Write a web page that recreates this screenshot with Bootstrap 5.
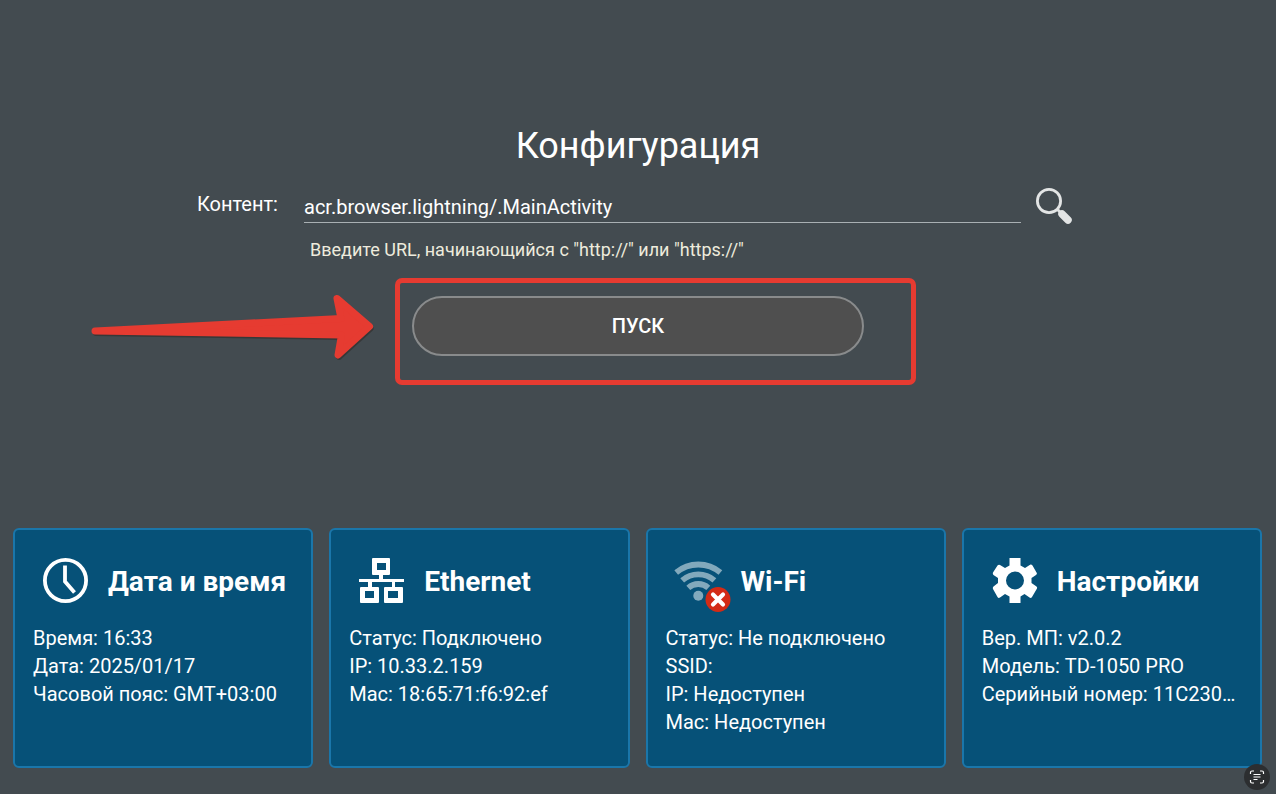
<!DOCTYPE html>
<html lang="ru">
<head>
<meta charset="utf-8">
<meta name="viewport" content="width=device-width, initial-scale=1">
<title>Конфигурация</title>
<link rel="stylesheet" href="https://cdn.jsdelivr.net/npm/bootstrap@5.3.0/dist/css/bootstrap.min.css">
<style>
  body { background: #434b50; color: #fff; font-family: Roboto, "Noto Sans", sans-serif; font-size: 20px; line-height: 28px; }
  .config-area { padding-top: 124px; }
  .config-title { font-size: 36px; line-height: 44px; font-weight: 400; margin-bottom: 12px; }
  .config-form { width: 100%; max-width: 882px; }
  .content-label { width: 107px; padding-top: 10px; }
  .url-input { height: 43px; padding: 12px 0 0; border: 0; border-bottom: 1px solid #a9b0b3; border-radius: 0; background: transparent; color: #fff; font-size: 20px; line-height: 28px; }
  .url-input:focus { background: transparent; color: #fff; box-shadow: none; border-color: #fff; }
  .url-hint { margin: 6px 0 0 113px; font-size: 18px; line-height: 28px; color: #eeebdd; }
  .search-btn { width: 50px; height: 50px; }
  .start-wrap { width: 452px; max-width: 100%; margin-top: 32px; }
  .start-btn { height: 60px; border: 2px solid #898b8c; background: #4f4f4f; color: #fff; font-size: 20px; font-weight: 500; }
  .start-btn:hover { background: #5a5a5a; border-color: #a0a0a0; color: #fff; }
  /* callout frame and arrow drawn over the form */
  .callout-frame { top: -18px; left: -17px; right: -52px; bottom: -29px; border: 5px solid #e63b31; border-radius: 7px; pointer-events: none; }
  .callout-arrow { top: -6px; right: calc(100% + 34px); pointer-events: none; }
  .tiles { padding: 0 14px 26px 13px; }
  .tile-grid { display: grid; grid-template-columns: repeat(4, 1fr); gap: 16px; }
  .tile { min-height: 240px; padding: 24px 18px; border: 2px solid #1a76aa; border-radius: 6px; background: #065178; color: #fff; }
  .tile-head { height: 54px; margin: 0 0 16px 6px; gap: 15px; }
  .tile-head svg { flex: none; overflow: visible; }
  .tile-title { font-size: 28px; line-height: 36px; font-weight: 700; margin: 0; padding-top: 2px; white-space: nowrap; }
  .scan-btn { right: 6px; bottom: 4px; width: 26px; height: 26px; background: #2c2e30; }
  @media (max-width: 1100px) { .tile-grid { grid-template-columns: repeat(2, 1fr); } }
</style>
</head>
<body class="d-flex flex-column min-vh-100 overflow-x-hidden">
<main class="config-area flex-grow-1 d-flex flex-column align-items-center">
  <h1 class="config-title text-center">Конфигурация</h1>
  <form class="config-form d-flex flex-column">
    <div class="d-flex align-items-start">
      <label class="content-label flex-shrink-0" for="url">Контент:</label>
      <input class="url-input form-control flex-grow-1" id="url" type="text" value="acr.browser.lightning/.MainActivity" aria-describedby="hint">
      <button class="search-btn btn border-0 p-0 ms-2 flex-shrink-0" type="button" aria-label="Поиск">
        <svg class="d-block" width="50" height="50" viewBox="0 0 50 50" fill="none" stroke="#e3e5e5">
          <circle cx="20" cy="21" r="11.6" stroke-width="2.8"/>
          <path d="M28 29l4 4" stroke-width="3"/>
          <path d="M33 34l6 6" stroke-width="7.500" stroke-linecap="round"/>
        </svg>
      </button>
    </div>
    <div class="url-hint" id="hint">Введите URL, начинающийся с "http://" или "https://"</div>
    <div class="start-wrap position-relative align-self-center">
      <button class="start-btn btn rounded-pill w-100" type="button">ПУСК</button>
      <div class="callout-frame position-absolute"></div>
      <svg class="callout-arrow position-absolute" width="290" height="72" viewBox="0 0 290 72" aria-hidden="true">
        <g stroke-linejoin="round">
          <path transform="translate(1 2)" d="M7 41L253 28.500L249 8.500L281.500 36.500L250 65L253.500 45Z" fill="#33302f" stroke="#33302f" stroke-width="6" opacity=".7"/>
          <path d="M7 41L253 28.500L249 8.500L281.500 36.500L250 65L253.500 45Z" fill="#e63b31" stroke="#e63b31" stroke-width="7"/>
        </g>
      </svg>
    </div>
  </form>
</main>
<section class="tiles">
  <div class="tile-grid">
    <article class="tile">
      <div class="tile-head d-flex align-items-center">
        <svg width="54" height="54" viewBox="0 0 54 54" fill="none" stroke="#fff" aria-hidden="true">
          <circle cx="26.500" cy="26.500" r="20.600" stroke-width="3.800"/><path d="M26 11.500V27.500L35.500 38.500" stroke-width="3.800"/>
        </svg>
        <h2 class="tile-title">Дата и время</h2>
      </div>
      <div>Время: 16:33</div><div>Дата: 2025/01/17</div><div>Часовой пояс: GMT+03:00</div>
    </article>
    <article class="tile">
      <div class="tile-head d-flex align-items-center">
        <svg width="54" height="54" viewBox="0 0 54 54" aria-hidden="true">
          <path fill="#fff" fill-rule="evenodd" d="M18 4h16q1 0 1 1v15q0 1-1 1h-6v4h21v3h-9v5h7q1 0 1 1v14q0 1-1 1H30q-1 0-1-1V34q0-1 1-1h7v-5H17v5h6q1 0 1 1v14q0 1-1 1H6q-1 0-1-1V34q0-1 1-1h7v-5H4v-3h20v-4h-6q-1 0-1-1V5q0-1 1-1zM22 9v7h9V9zM10 37v7h9v-7zM33 37v7h10v-7z"/>
        </svg>
        <h2 class="tile-title">Ethernet</h2>
      </div>
      <div>Статус: Подключено</div><div>IP: 10.33.2.159</div><div>Mac: 18:65:71:f6:92:ef</div>
    </article>
    <article class="tile">
      <div class="tile-head d-flex align-items-center">
        <svg width="54" height="54" viewBox="0 0 54 54" aria-hidden="true">
          <g fill="none" stroke="#82a9bc" stroke-width="5.800">
            <path d="M4.200 18.500A34.500 34.500 0 0 1 48.400 18.500"/>
            <path d="M10.200 26.400A24.600 24.600 0 0 1 42.400 26.400"/>
            <path d="M16.300 33.800A15 15 0 0 1 36.300 33.800"/>
          </g>
          <circle cx="26.300" cy="41.800" r="5" fill="#82a9bc"/>
          <circle cx="46" cy="45.500" r="12.500" fill="#d32b16"/>
          <path d="M41 40.500l10 10M51 40.500l-10 10" stroke="#fff" stroke-width="4.200" stroke-linecap="round"/>
        </svg>
        <h2 class="tile-title">Wi-Fi</h2>
      </div>
      <div>Статус: Не подключено</div><div>SSID:</div><div>IP: Недоступен</div><div>Mac: Недоступен</div>
    </article>
    <article class="tile">
      <div class="tile-head d-flex align-items-center">
        <svg width="54" height="54" viewBox="0 0 54 54" aria-hidden="true">
          <path fill="#fff" fill-rule="evenodd" d="M21.500 4h11v7.500l4.500 2.500 5.500-3.500q1.500 0 2 1l4 7q1 1.500-.5 2.500L43.500 24v5l5 3.500q1 1 .5 2L44 43q-1 1.500-2.500.5L36.500 40l-4 2.500V49h-11v-6.500L17 40l-5 3.500q-1.500 1-2.500-.5L5 35q-.5-1.500.5-2.500L10 29v-5l-4.500-3q-1-1-.5-2.500l4.500-7q1-1 2.500-.5l5 3 4.500-2.500zM27 17.500a9 9 0 1 0 0 18 9 9 0 0 0 0-18z"/>
        </svg>
        <h2 class="tile-title">Настройки</h2>
      </div>
      <div>Вер. МП: v2.0.2</div><div>Модель: TD-1050 PRO</div><div class="text-nowrap">Серийный номер: 11C230…</div>
    </article>
  </div>
</section>
<button class="scan-btn btn position-fixed rounded-circle border-0 p-0 d-flex align-items-center justify-content-center" type="button" aria-label="Сканировать текст">
  <svg width="16" height="14" viewBox="0 0 16 14" fill="none" stroke="#fff" stroke-width="1.200">
    <path d="M1.500 4V2.500q0-1.500 1.500-1.500H5M11 1h2q1.500 0 1.500 1.500V4M14.500 10v1.500q0 1.500-1.500 1.500h-2M5 13H3q-1.500 0-1.500-1.500V10M4.500 4.500h7M4.500 7h7M4.500 9.500h4"/>
  </svg>
</button>
<script src="https://cdn.jsdelivr.net/npm/bootstrap@5.3.0/dist/js/bootstrap.bundle.min.js"></script>
</body>
</html>
